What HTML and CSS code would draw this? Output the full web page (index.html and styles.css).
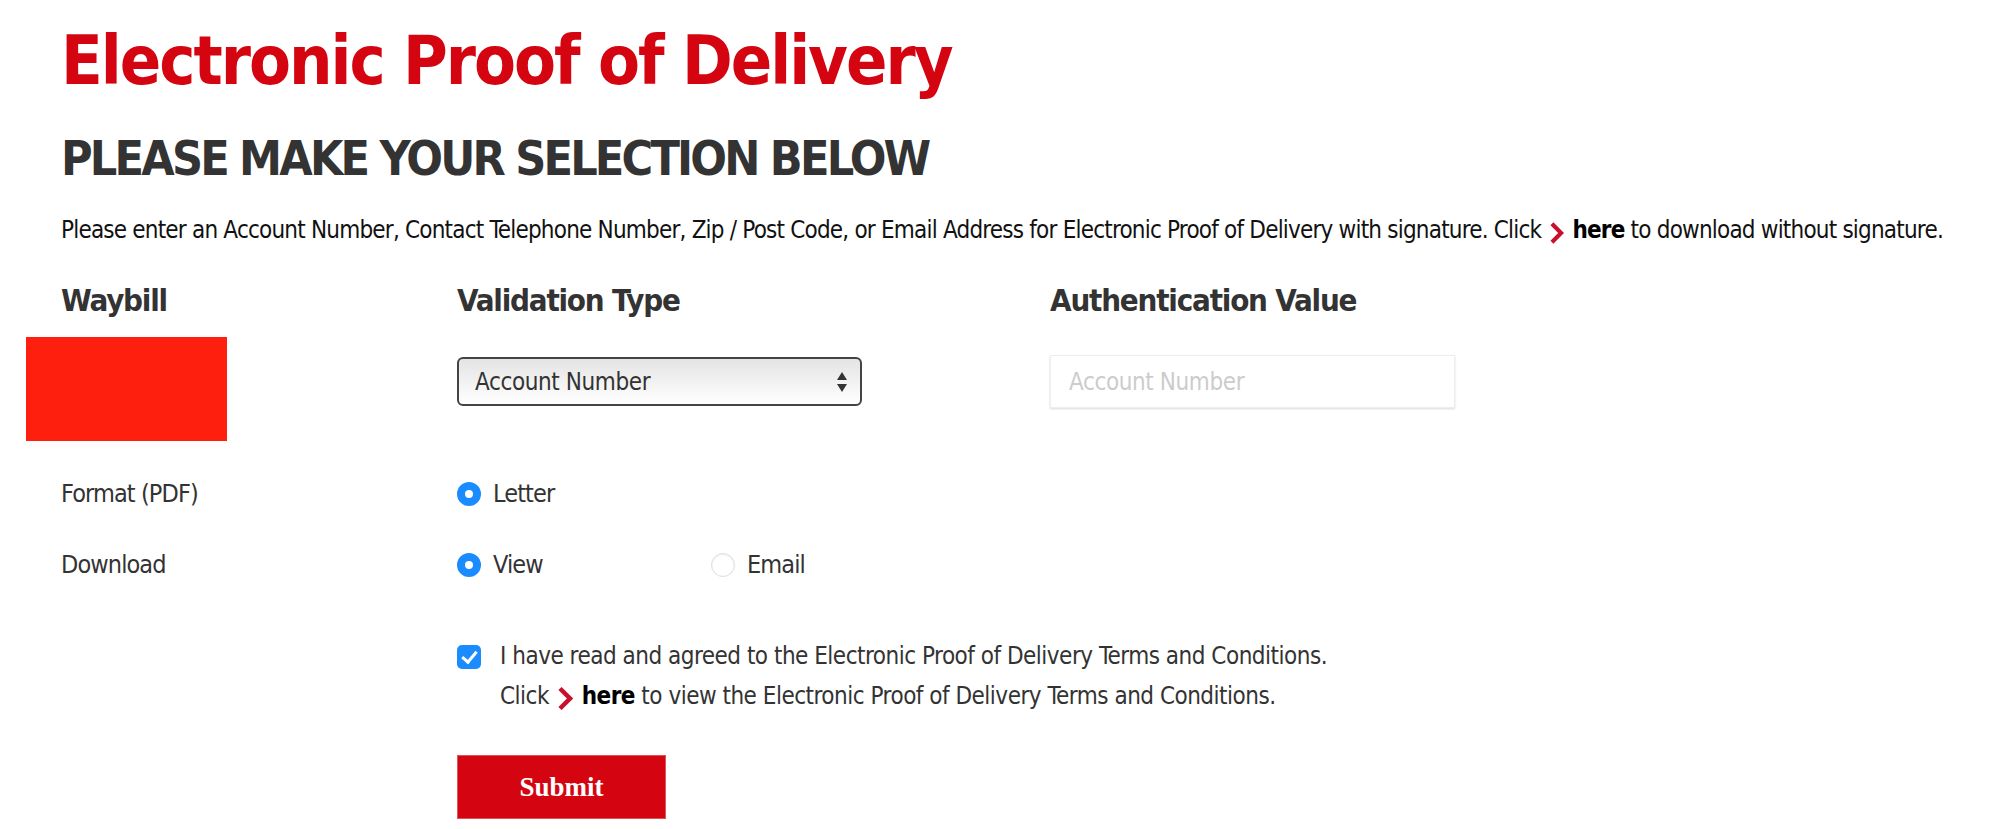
FILE: index.html
```html
<!DOCTYPE html>
<html lang="en">
<head>
    <meta charset="UTF-8">
    <meta name="viewport" content="width=device-width, initial-scale=1.0">
    <title>Electronic Proof of Delivery</title>
    <link rel="stylesheet" href="styles.css">
</head>
<body>
    <div class="page">
        <h1 class="title">Electronic Proof of Delivery</h1>
        <h2 class="subtitle">PLEASE MAKE YOUR SELECTION BELOW</h2>
        <p class="intro">Please enter an Account Number, Contact Telephone Number, Zip / Post Code, or Email Address for Electronic Proof of Delivery with signature. Click <svg class="chev" viewBox="0 0 16 24"><polyline points="3,2 13,12 3,22"/></svg> <a href="#" class="here">here</a> to download without signature.</p>

        <form class="epod" onsubmit="return false">
            <div class="row heads">
                <div class="head">Waybill</div>
                <div class="head">Validation Type</div>
                <div class="head">Authentication Value</div>
            </div>

            <div class="row fields">
                <div class="waybill"></div>
                <div class="select-wrap">
                    <select class="select">
                        <option>Account Number</option>
                        <option>Contact Telephone Number</option>
                        <option>Zip / Post Code</option>
                        <option>Email Address</option>
                    </select>
                    <svg class="updown" viewBox="0 0 12 22"><polygon points="6,1 11,9 1,9"/><polygon points="1,13 11,13 6,21"/></svg>
                </div>
                <input type="text" class="auth" placeholder="Account Number">
            </div>

            <div class="row option-row">
                <div class="label">Format (PDF)</div>
                <div class="options">
                    <label class="option"><input type="radio" name="format" checked> Letter</label>
                </div>
            </div>

            <div class="row option-row second">
                <div class="label">Download</div>
                <div class="options">
                    <label class="option"><input type="radio" name="download" checked> View</label>
                    <label class="option"><input type="radio" name="download"> Email</label>
                </div>
            </div>

            <div class="row agree">
                <div></div>
                <label class="terms">
                    <input type="checkbox" checked>
                    <span>I have read and agreed to the Electronic Proof of Delivery Terms and Conditions.<br>
                    Click <svg class="chev" viewBox="0 0 16 24"><polyline points="3,2 13,12 3,22"/></svg> <a href="#" class="here">here</a> to view the Electronic Proof of Delivery Terms and Conditions.</span>
                </label>
            </div>

            <div class="row">
                <div></div>
                <button class="submit">Submit</button>
            </div>
        </form>
    </div>
</body>
</html>
```

FILE: styles.css
```css
body {
    margin: 0;
    background: #fff;
    color: #333;
    font-family: "DejaVu Sans Condensed", "DejaVu Sans", sans-serif;
}
.page {
    padding: 24px 0 0 61px;
}
.title {
    margin: 0;
    font-size: 68px;
    line-height: 74px;
    letter-spacing: -2px;
    font-weight: bold;
    color: #d40511;
}
.subtitle {
    margin: 34px 0 0;
    font-size: 48px;
    line-height: 52px;
    letter-spacing: -2.8px;
    font-weight: bold;
    color: #333;
}
.intro {
    margin: 31px 0 0;
    font-size: 24px;
    line-height: 30px;
    letter-spacing: -0.8px;
    color: #111;
    white-space: nowrap;
}
.chev {
    width: 15px;
    height: 22px;
    vertical-align: -6px;
    margin: 0 2px;
}
.chev polyline {
    fill: none;
    stroke: #c8102e;
    stroke-width: 4.5;
}
.here {
    color: #000;
    font-weight: bold;
    text-decoration: none;
}
.row {
    display: grid;
    grid-template-columns: 396px 593px 1fr;
}
.heads {
    margin-top: 35px;
}
.head {
    font-size: 31px;
    line-height: 40px;
    letter-spacing: -1.2px;
    font-weight: bold;
    color: #333;
}
.fields {
    margin-top: 17px;
    align-items: start;
}
.waybill {
    width: 201px;
    height: 104px;
    margin-left: -35px;
    background: #ff1f0f;
}
.select-wrap {
    position: relative;
    width: 405px;
    margin-top: 20px;
}
.select {
    appearance: none;
    -webkit-appearance: none;
    width: 405px;
    height: 49px;
    padding: 0 0 0 16px;
    border: 2px solid #444;
    border-radius: 6px;
    background: linear-gradient(#e4e4e4, #fff);
    font-family: inherit;
    font-size: 24px;
    letter-spacing: -0.4px;
    color: #333;
}
.updown {
    position: absolute;
    right: 14px;
    top: 14px;
    width: 12px;
    height: 22px;
    fill: #333;
    pointer-events: none;
}
.auth {
    width: 405px;
    height: 53px;
    margin-top: 18px;
    box-sizing: border-box;
    padding: 0 18px;
    border: 1px solid #eee;
    box-shadow: 0 1px 2px rgba(0, 0, 0, 0.15);
    font-family: inherit;
    font-size: 24px;
    letter-spacing: -0.4px;
    color: #333;
}
.auth::placeholder {
    color: #ccc;
}
.option-row {
    margin-top: 33px;
    font-size: 25px;
    line-height: 40px;
    letter-spacing: -0.9px;
}
.option-row.second {
    margin-top: 31px;
}
.options {
    display: flex;
}
.option {
    display: flex;
    align-items: center;
    gap: 12px;
    min-width: 254px;
    color: #333;
}
input[type="radio"] {
    appearance: none;
    -webkit-appearance: none;
    margin: 0;
    width: 24px;
    height: 24px;
    border-radius: 50%;
    border: 1px solid #ddd;
    background: #fff;
    box-shadow: inset 0 1px 2px rgba(0, 0, 0, 0.08);
}
input[type="radio"]:checked {
    border: 8px solid #1a8cff;
    box-shadow: none;
}
.agree {
    margin-top: 51px;
}
.terms {
    display: flex;
    gap: 19px;
    font-size: 24px;
    line-height: 40px;
    letter-spacing: -0.5px;
    color: #333;
    white-space: nowrap;
}
.terms .chev {
    width: 16px;
    height: 25px;
    vertical-align: -7px;
}
input[type="checkbox"] {
    appearance: none;
    -webkit-appearance: none;
    flex: none;
    margin: 9px 0 0;
    width: 24px;
    height: 24px;
    border-radius: 5px;
    background: #1a8cff;
    position: relative;
}
input[type="checkbox"]:checked::after {
    content: "";
    position: absolute;
    left: 8px;
    top: 3px;
    width: 6px;
    height: 12px;
    border: solid #fff;
    border-width: 0 3px 3px 0;
    transform: rotate(40deg);
}
.submit {
    margin-top: 39px;
    width: 209px;
    height: 64px;
    background: #d40511;
    border: 1px solid #e0525a;
    color: #fff;
    font-family: "Liberation Serif", serif;
    font-size: 27px;
    font-weight: bold;
    letter-spacing: 0;
    cursor: pointer;
}
```
